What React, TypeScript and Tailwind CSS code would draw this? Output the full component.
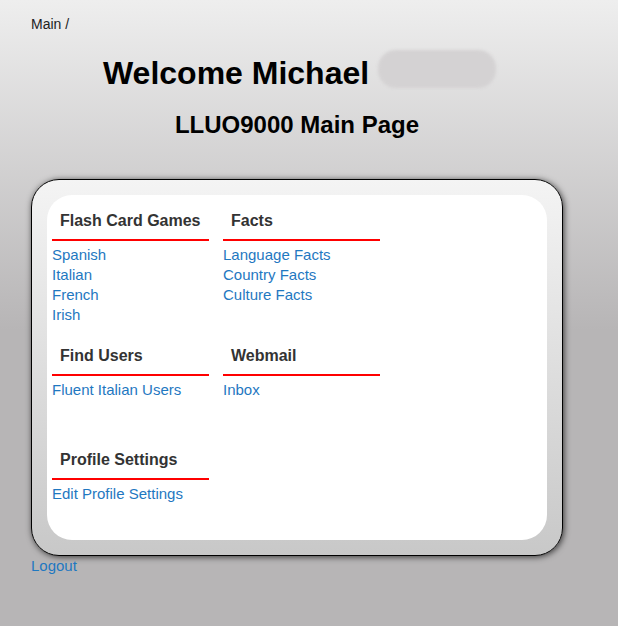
const sections = [
  [
    { title: "Flash Card Games", links: ["Spanish", "Italian", "French", "Irish"] },
    { title: "Facts", links: ["Language Facts", "Country Facts", "Culture Facts"] },
  ],
  [
    { title: "Find Users", links: ["Fluent Italian Users"] },
    { title: "Webmail", links: ["Inbox"] },
  ],
  [{ title: "Profile Settings", links: ["Edit Profile Settings"] }],
];

const rowGaps = ["mb-[21px]", "mb-[50px]", ""];

function Section({ title, links }: { title: string; links: string[] }) {
  return (
    <div>
      <h3 className="pl-2 pb-[9px] border-b-2 border-[#ff0000] text-[16px] leading-[19px] font-bold text-[#333333]">
        {title}
      </h3>
      <ul className="mt-[4px] text-[15px] leading-5">
        {links.map((link) => (
          <li key={link}>
            <a href="#" className="text-[#1f78c1]">
              {link}
            </a>
          </li>
        ))}
      </ul>
    </div>
  );
}

export default function App() {
  return (
    <div className="min-h-screen pt-4 bg-[linear-gradient(to_bottom,#eeeeee_0px,#b7b5b6_330px,#b7b5b6_100%)] font-['Liberation_Sans',Arial,sans-serif]">
      <div className="ml-[31px] w-[532px]">
        <div className="text-[14px] leading-4 text-[#222222]">Main /</div>

        <h1 className="mt-[23px] pl-[5px] text-center text-[32px] leading-[37px] font-bold text-black">
          Welcome Michael{" "}
          <span className="inline-block w-[118px] h-[38px] -mt-[5px] -mb-[5px] align-[1px] rounded-[18px] bg-[#d4d2d3] blur-[1.5px]" />
        </h1>
        <h2 className="mt-[19px] text-center text-[24px] leading-[28px] font-bold text-black">
          LLUO9000 Main Page
        </h2>

        <div className="mt-[40px] rounded-[28px] border border-black p-[15px] bg-[linear-gradient(to_bottom,#f4f4f4,#c8c8c8)] shadow-[1px_1px_6px_rgba(0,0,0,0.7)]">
          <div className="rounded-[25px] bg-white px-[5px] pt-[16px] pb-[36px]">
            {sections.map((row, i) => (
              <div key={i} className={`grid grid-cols-[157px_157px] gap-x-[14px] ${rowGaps[i]}`}>
                {row.map((s) => (
                  <Section key={s.title} title={s.title} links={s.links} />
                ))}
              </div>
            ))}
          </div>
        </div>

        <a href="#" className="block text-[15px] leading-5 text-[#1f78c1]">
          Logout
        </a>
      </div>
    </div>
  );
}
